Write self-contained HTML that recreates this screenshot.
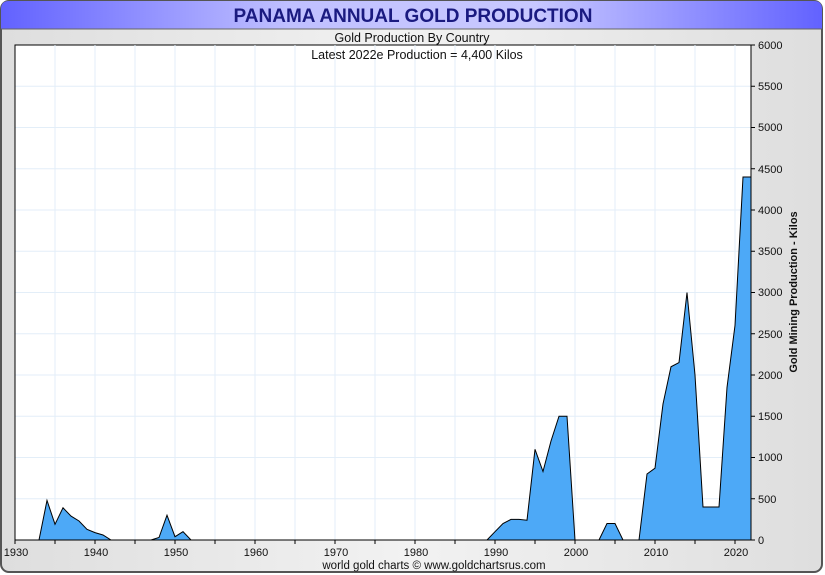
<!DOCTYPE html>
<html><head><meta charset="utf-8"><style>
html,body{margin:0;padding:0;width:825px;height:575px;overflow:hidden;background:#fff}
</style></head><body>
<svg width="825" height="575" xmlns="http://www.w3.org/2000/svg" font-family="Liberation Sans, sans-serif">
<defs>
<linearGradient id="tb" x1="0" x2="1" y1="0" y2="0">
<stop offset="0" stop-color="#6262ff"/><stop offset="0.35" stop-color="#c0c0ff"/><stop offset="0.65" stop-color="#c8c8ff"/><stop offset="1" stop-color="#6262ff"/>
</linearGradient>
<linearGradient id="bg" x1="0" x2="1" y1="0" y2="0">
<stop offset="0" stop-color="#dedede"/><stop offset="0.5" stop-color="#f2f2f2"/><stop offset="1" stop-color="#dedede"/>
</linearGradient>
</defs>
<rect x="1" y="1" width="821" height="571" rx="8" fill="url(#bg)" stroke="#555" stroke-width="2"/>
<path d="M1,29 L1,9 Q1,1 9,1 L814,1 Q822,1 822,9 L822,29 Z" fill="url(#tb)"/>
<line x1="1" y1="29" x2="822" y2="29" stroke="#666" stroke-width="1"/>
<text x="413" y="22" text-anchor="middle" font-size="19" font-weight="bold" fill="#1a1a80">PANAMA ANNUAL GOLD PRODUCTION</text>
<text x="412" y="42" text-anchor="middle" font-size="12.5" fill="#111">Gold Production By Country</text>
<rect x="15" y="45" width="736" height="495" fill="#fff" stroke="#000" stroke-width="1"/>
<g stroke="#e3eef8" stroke-width="1">
<path d="M55,45V540M95,45V540M135,45V540M175,45V540M215,45V540M255,45V540M295,45V540M335,45V540M375,45V540M415,45V540M455,45V540M495,45V540M535,45V540M575,45V540M615,45V540M655,45V540M695,45V540M735,45V540"/>
<path d="M15,498.75H751M15,457.5H751M15,416.25H751M15,375H751M15,333.75H751M15,292.5H751M15,251.25H751M15,210H751M15,168.75H751M15,127.5H751M15,86.25H751"/>
</g>
<text x="417" y="59" text-anchor="middle" font-size="12.5" fill="#111">Latest 2022e  Production = 4,400 Kilos</text>
<polygon fill="#4da9f7" stroke="#000" stroke-width="1" points="15,540 39,540 47,500.4 55,524.3 63,507.8 71,516.1 79,521 87,529.3 95,532.6 103,535 111,540 151,540 159,537.5 167,515.2 175,536.7 183,531.7 191,540 487,540 495,531.7 503,523.5 511,519.4 519,519.4 527,520.2 535,449.3 543,471.5 551,441 559,416.25 567,416.25 575,540 599,540 607,523.5 615,523.5 623,540 639,540 647,474 655,468.2 663,403.9 671,366.75 679,362.6 687,292.5 695,375 703,507 711,507 719,507 727,387.4 735,325.5 743,177 751,177 751,540"/>
<line x1="15" y1="540" x2="751" y2="540" stroke="#000"/>
<line x1="751" y1="45" x2="751" y2="540" stroke="#000"/>
<line x1="15" y1="45" x2="15" y2="540" stroke="#000"/>
<g stroke="#000">
<path d="M15,540v4M55,540v4M95,540v4M135,540v4M175,540v4M215,540v4M255,540v4M295,540v4M335,540v4M375,540v4M415,540v4M455,540v4M495,540v4M535,540v4M575,540v4M615,540v4M655,540v4M695,540v4M735,540v4"/>
<path d="M751,540h4M751,498.75h4M751,457.5h4M751,416.25h4M751,375h4M751,333.75h4M751,292.5h4M751,251.25h4M751,210h4M751,168.75h4M751,127.5h4M751,86.25h4M751,45h4"/>
</g>
<g font-size="11" fill="#111" text-anchor="middle">
<text x="16" y="556">1930</text><text x="96" y="556">1940</text><text x="176" y="556">1950</text><text x="256" y="556">1960</text><text x="336" y="556">1970</text><text x="416" y="556">1980</text><text x="496" y="556">1990</text><text x="576" y="556">2000</text><text x="656" y="556">2010</text><text x="736" y="556">2020</text>
</g>
<g font-size="11" fill="#111">
<text x="758" y="544">0</text><text x="758" y="503">500</text><text x="758" y="461">1000</text><text x="758" y="420">1500</text><text x="758" y="379">2000</text><text x="758" y="338">2500</text><text x="758" y="296">3000</text><text x="758" y="255">3500</text><text x="758" y="214">4000</text><text x="758" y="173">4500</text><text x="758" y="131">5000</text><text x="758" y="90">5500</text><text x="758" y="49">6000</text>
</g>
<text transform="translate(797,292) rotate(-90)" text-anchor="middle" font-size="11" font-weight="bold" fill="#111">Gold Mining Production - Kilos</text>
<text x="434" y="569" text-anchor="middle" font-size="11.5" fill="#111">world gold charts © www.goldchartsrus.com</text>
</svg>
</body></html>
